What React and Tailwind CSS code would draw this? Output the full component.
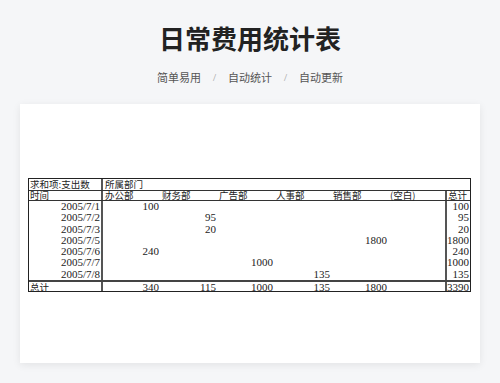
import React from 'react'

const depts = ['办公部', '财务部', '广告部', '人事部', '销售部', '(空白)']

const rows = [
    { date: '2005/7/1', vals: [100, null, null, null, null, null], total: 100 },
    { date: '2005/7/2', vals: [null, 95, null, null, null, null], total: 95 },
    { date: '2005/7/3', vals: [null, 20, null, null, null, null], total: 20 },
    { date: '2005/7/5', vals: [null, null, null, null, 1800, null], total: 1800 },
    { date: '2005/7/6', vals: [240, null, null, null, null, null], total: 240 },
    { date: '2005/7/7', vals: [null, null, 1000, null, null, null], total: 1000 },
    { date: '2005/7/8', vals: [null, null, null, 135, null, null], total: 135 },
]

const totals = [340, 115, 1000, 135, 1800, null]

// 中文单元格 / 数字单元格
const cnCell = "font-['Noto_Sans_CJK_SC',sans-serif] text-[9.5px] whitespace-nowrap"
const numCell = "font-['Liberation_Serif',serif] text-[11px] text-right pr-[1px] whitespace-nowrap"

const PivotTable = () => {
    return (
        <div className="w-[443px] border border-[#222] text-[#222] bg-white">
            {/* 标题行 */}
            <div className="flex h-[12px] border-b border-[#333]">
                <div className={`w-[74px] border-r-2 border-[#555] leading-[11px] pl-[1px] ${cnCell}`}>求和项:支出数</div>
                <div className={`flex-1 leading-[11px] pl-[2px] ${cnCell}`}>所属部门</div>
            </div>
            <div className="flex h-[10px] border-b border-[#333]">
                <div className={`w-[74px] border-r-2 border-[#555] leading-[9px] pl-[1px] ${cnCell}`}>时间</div>
                {depts.map((d) => (
                    <div key={d} className={`w-[57px] leading-[9px] pl-[2px] ${cnCell}`}>{d}</div>
                ))}
                <div className={`flex-1 border-l-2 border-[#555] leading-[9px] pl-[1px] ${cnCell}`}>总计</div>
            </div>

            {/* 数据 */}
            <div className="flex flex-col">
                {rows.map((r) => (
                    <div key={r.date} className="flex h-[11.3px]">
                        <div className={`w-[74px] border-r-2 border-[#555] leading-[11px] ${numCell}`}>{r.date}</div>
                        {r.vals.map((v, i) => (
                            <div key={i} className={`w-[57px] leading-[11px] ${numCell}`}>{v ?? ''}</div>
                        ))}
                        <div className={`flex-1 border-l-2 border-[#555] leading-[11px] ${numCell}`}>{r.total}</div>
                    </div>
                ))}
            </div>

            {/* 总计 */}
            <div className="flex h-[11px] border-t-2 border-[#444]">
                <div className={`w-[74px] border-r-2 border-[#555] leading-[10px] pl-[1px] ${cnCell}`}>总计</div>
                {totals.map((v, i) => (
                    <div key={i} className={`w-[57px] leading-[10px] ${numCell}`}>{v ?? ''}</div>
                ))}
                <div className={`flex-1 border-l-2 border-[#555] leading-[10px] ${numCell}`}>3390</div>
            </div>
        </div>
    )
}

export default function App() {
    return (
        <div className="w-[500px] h-[383px] overflow-hidden bg-[#f5f6f8] flex flex-col items-center font-['Noto_Sans_CJK_SC',sans-serif]">
            <h1 className="mt-[21px] h-[34px] leading-[34px] text-[26px] font-bold text-[#222]">日常费用统计表</h1>
            <div className="mt-[14px] h-[16px] leading-[16px] text-[11px] text-[#555] flex items-center">
                <span>简单易用</span>
                <span className="mx-[12px] text-[#999] font-['Liberation_Serif',serif]">/</span>
                <span>自动统计</span>
                <span className="mx-[12px] text-[#999] font-['Liberation_Serif',serif]">/</span>
                <span>自动更新</span>
            </div>
            <div className="mt-[19px] w-[460px] h-[259px] shrink-0 bg-white shadow-[0_2px_8px_rgba(0,0,0,0.08)] pt-[74px] pl-[8px]">
                <PivotTable />
            </div>
        </div>
    )
}
